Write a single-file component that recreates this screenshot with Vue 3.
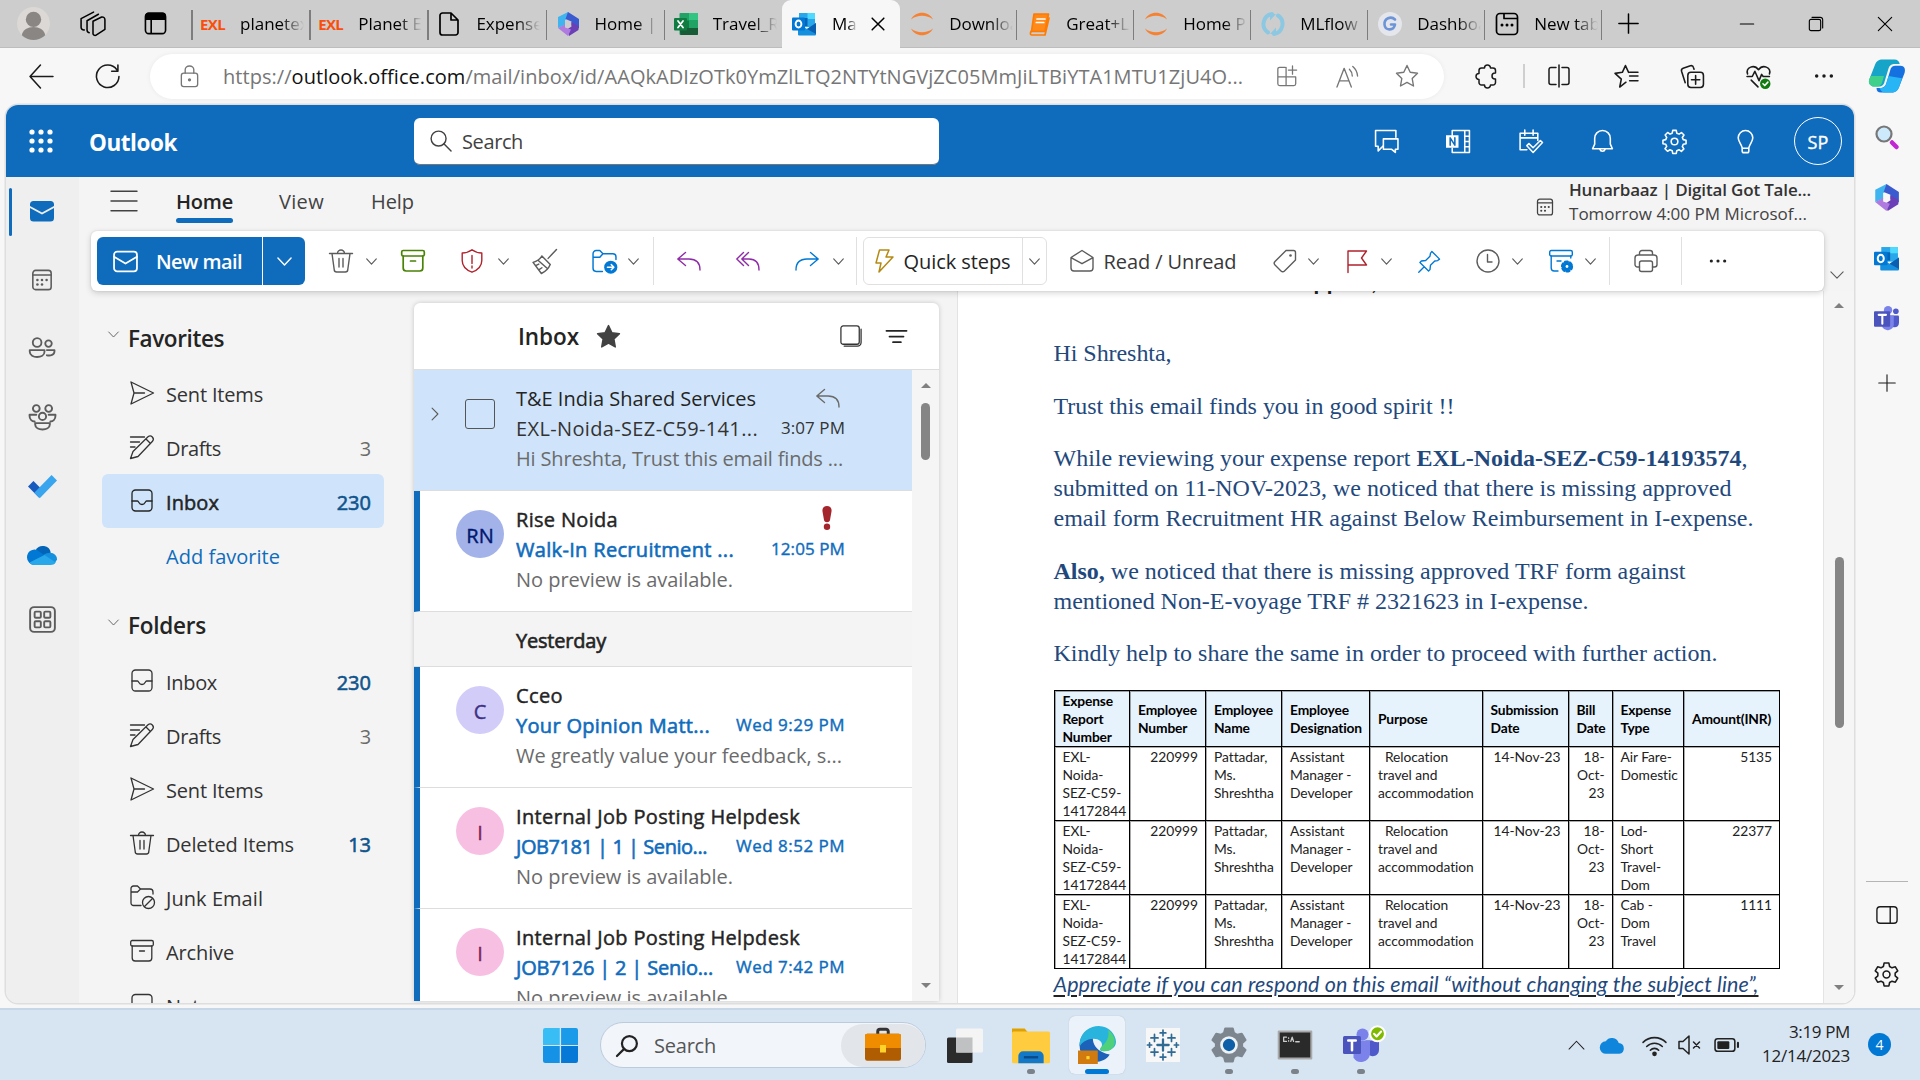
<script setup>
import { h } from 'vue'

// Line icons drawn on a 24 unit grid; colours come from currentColor.
const glyphs = {
  back: '<path d="M23 12H1M11 1 1 12l10 11"/>',
  refresh: '<path d="M21 5.500A10.800 10.800 0 1 0 23 12M22 1v6h-6"/>',
  lock: '<rect x="3.500" y="8.500" width="17" height="14" rx="2.500"/><path d="M7.500 8.500V5a4.500 4 0 0 1 9 0v3.500"/><circle cx="12" cy="15.500" r="1" fill="currentColor"/>',
  apps4: '<path d="M10 2.500H4A2 2 0 0 0 2 4.500V20.500a2 2 0 0 0 2 2h15.500a2 2 0 0 0 2-2v-7.500H2M11 2.500v20M18 1v9M13.500 5.500h9"/>',
  readA: '<path d="M1 23 8.500 3.500 16 23M4 16.500h9M14 4.500a10 10 0 0 1 3 7M17.500 1.500a14 14 0 0 1 5 10"/>',
  star: '<path d="m12 1.500 3.200 6.800 7.300 1-5.300 5.200 1.300 7.500L12 18.400 5.500 22l1.300-7.500L1.500 9.300l7.300-1z"/>',
  starFill: '<path fill="currentColor" d="m12 1.500 3.200 6.800 7.300 1-5.300 5.200 1.300 7.500L12 18.400 5.500 22l1.300-7.500L1.500 9.300l7.300-1z"/>',
  puzzle: '<path d="M6 4h3.500a3 3 0 0 1 6 0H18a2.500 2.500 0 0 1 2.500 2.500V9h-.500a3 3 0 0 0 0 6h.500v3.500A2.500 2.500 0 0 1 18 21h-2.500a3 3 0 0 1-6 0H6.500A2.500 2.500 0 0 1 4 18.500V15.500a3 3 0 0 1 0-6V6.500A2.500 2.500 0 0 1 6.500 4z"/>',
  split: '<path d="M9 3.500H4a2 2 0 0 0-2 2v13a2 2 0 0 0 2 2h5M15 3.500h5a2 2 0 0 1 2 2v13a2 2 0 0 1-2 2h-5M12 1v22"/>',
  favs: '<path d="m12 17.500-6 4.600 1.500-7.600L1.500 9l7-1 3-6.500L14.500 8M15.500 11.500h8M15.500 16h8M15.500 8h8" transform="translate(-.5 0)"/>',
  collect: '<rect x="7.500" y="8" width="15" height="14.500" rx="3"/><path d="M15 11v8.500M11 15.200h8M5 18l-3.500-11A2.500 2.500 0 0 1 3 4L10 1.700a2.500 2.500 0 0 1 3 1.800l.500 1.500"/>',
  heart: '<path d="M1.500 9.500C-.500 3 8 0 12 5.500 16 0 24.500 3 22.500 9.500M1 12h5l2.500-5 4 9 2.500-6 1.500 2h6M5 15.500l6.500 6.500"/><circle cx="18.500" cy="19" r="5" fill="#107c10" stroke="none"/><path d="m16.300 19 1.700 1.700 3-3.300" stroke="#fff"/>',
  dots: '<g fill="currentColor" stroke="none"><circle cx="4" cy="12" r="1.900"/><circle cx="12" cy="12" r="1.900"/><circle cx="20" cy="12" r="1.900"/></g>',
  waffle: '<g fill="currentColor" stroke="none"><circle cx="3" cy="3" r="2.600"/><circle cx="12" cy="3" r="2.600"/><circle cx="21" cy="3" r="2.600"/><circle cx="3" cy="12" r="2.600"/><circle cx="12" cy="12" r="2.600"/><circle cx="21" cy="12" r="2.600"/><circle cx="3" cy="21" r="2.600"/><circle cx="12" cy="21" r="2.600"/><circle cx="21" cy="21" r="2.600"/></g>',
  search: '<circle cx="10" cy="10" r="7.800"/><path d="m15.500 15.500 7.500 7.500"/>',
  chat: '<path d="M21 8V1.500H1.500v15H4V21l4.500-4.500"/><path d="M9 9.500h14v10h-2.500v3L17 19.500H9z"/>',
  onenote: '<path d="M6 6.500V1.500h16.500v21H6v-4M18 2v20M18 7h4M18 12h4M18 17h4"/><rect x="0" y="6" width="12" height="12" fill="currentColor" stroke="none"/><path d="M4 15.500v-7l4.500 7v-7" stroke="#0f6cbd"/>',
  calcheck: '<path d="M8.500 20H2V4h17v7M2 8.500h17M6.500 1v5M14.500 1v5"/><path d="m8.500 16 2-2 4 4 7-7 2 2-9 9.500z"/>',
  bell: '<path d="M12 1.500c-4.500 0-7.500 3.500-7.500 7.500v5.500L2.500 19h19l-2-4.500V9c0-4-3-7.500-7.500-7.500zM9.500 19.500a2.600 2.600 0 0 0 5 0"/>',
  cog: '<circle cx="12" cy="12" r="3.200"/><path d="M10.300 1.300h3.400l.500 2.700 2.200.900 2.300-1.500 2.400 2.400-1.600 2.300.900 2.100 2.700.500v3.400l-2.700.500-.900 2.200 1.500 2.300-2.400 2.400-2.300-1.600-2.100.900-.500 2.700h-3.400l-.500-2.700-2.200-.900-2.300 1.500-2.400-2.400 1.600-2.300-.900-2.100-2.700-.500v-3.400l2.700-.500.900-2.200-1.500-2.300 2.400-2.400 2.300 1.600 2.100-.900z"/>',
  bulb: '<path d="M12 1.500a7 7 0 0 0-7 7c0 3.500 2.700 5.500 3.800 9.500V21a1.700 1.700 0 0 0 1.700 1.700h3a1.700 1.700 0 0 0 1.700-1.700v-3c1.100-4 3.800-6 3.800-9.500a7 7 0 0 0-7-7zM8.800 18.500h6.400"/>',
  mailFill: '<path fill="currentColor" stroke="none" d="M3.500 2h17A3.500 3.500 0 0 1 24 5.500V7L12 13.500 0 7V5.500A3.500 3.500 0 0 1 3.500 2zM0 9l12 6.500L24 9v10a3.500 3.500 0 0 1-3.500 3.500h-17A3.500 3.500 0 0 1 0 19z"/>',
  mail: '<rect x="1" y="2.500" width="22" height="19" rx="3"/><path d="m1 7.500 11 6.500 11-6.500"/>',
  calendar: '<rect x="2" y="1.500" width="20" height="21" rx="3"/><path d="M2 6.500h20"/><g fill="currentColor" stroke="none"><circle cx="7" cy="12" r="1.400"/><circle cx="12" cy="12" r="1.400"/><circle cx="17" cy="12" r="1.400"/><circle cx="7" cy="17" r="1.400"/><circle cx="12" cy="17" r="1.400"/></g>',
  people: '<circle cx="7.500" cy="6" r="4"/><circle cx="18" cy="7" r="3"/><path d="M.700 13h13.600v1.500c0 6.500-13.600 6.500-13.600 0zM16.500 13h7v1c0 3.500-3.500 4.500-7 3.800"/>',
  groups: '<circle cx="6.500" cy="4" r="3"/><circle cx="17.500" cy="4" r="3"/><circle cx="12" cy="11" r="3.200"/><path d="M5.500 17h13v1.200c0 6-13 6-13 0zM6.500 9.500H.500v1c0 3 2 5 4.500 5M17.500 9.500h6v1c0 3-2 5-4.500 5"/>',
  todo: '<g stroke="none"><path fill="#185abd" d="m0 12 4.500-4.500L13 16l-4 5z"/><path fill="#38a5ee" d="M5.200 17.200 19.500 2.500 24 7 9.700 21.700z"/></g>',
  cloud: '<g stroke="none"><path fill="#0364b8" d="M7 8a6.500 6.500 0 0 1 12 2l-5 5z"/><path fill="#0078d4" d="M0 14a6 6 0 0 1 8-6l7 5-9 7a6 6 0 0 1-6-6z"/><path fill="#1490df" d="M13 12c6-4 11-1 11 3.500L22 19z"/><path fill="#28a8ea" d="m2 18 12-6 9 6a5 5 0 0 1-4 2H6a6 6 0 0 1-4-2z"/></g>',
  cloudBlue: '<path stroke="none" fill="#0f86dc" d="M6 20a6 6 0 0 1-.500-12A7 7 0 0 1 18 9.500 5.300 5.300 0 0 1 18.500 20z"/>',
  appsGrid: '<rect x="1" y="1" width="22" height="22" rx="3.500"/><rect x="5" y="5" width="5.500" height="5.500" rx="1"/><rect x="13.500" y="5" width="5.500" height="5.500" rx="1"/><rect x="5" y="13.500" width="5.500" height="5.500" rx="1"/><rect x="13.500" y="13.500" width="5.500" height="5.500" rx="1"/>',
  menu: '<path d="M0 3h24M0 12h24M0 21h24"/>',
  chev: '<path d="m1.500 6.500 10.500 11 10.500-11"/>',
  chevUp: '<path d="m1.500 17 10.500-11 10.500 11"/>',
  chevR: '<path d="m7 2 10 10L7 22"/>',
  trash: '<path d="M.500 4.500h23M8.500 4.500a3.500 3.500 0 0 1 7 0M3 4.500l2.200 16a2.500 2.500 0 0 0 2.500 2.500h8.600a2.500 2.500 0 0 0 2.500-2.500l2.200-16M10 9.500v8.500M14 9.500v8.500"/>',
  archive: '<rect x=".700" y="1.500" width="22.600" height="5.500" rx="1.500"/><path d="M2.200 7v12A3 3 0 0 0 5.200 22h13.600a3 3 0 0 0 3-3V7M9.500 12h5"/>',
  shield: '<path d="M12 .800C9 3 6 4 2.200 4v7.500c0 6 4 9.500 9.800 11.700 5.800-2.200 9.800-5.700 9.800-11.700V4C18 4 15 3 12 .800zM12 6.500v8M12 17v2"/>',
  broom: '<path d="M23.500.500 15.500 9M9.500 6.800l8 8M9.500 6.800c-2 3-5 5-8.500 6l8 10.700c4-2 7-5 8.500-8.700M6 11 14.500 18.500M3.500 16l3-1.500M6.500 20l3-2"/>',
  move: '<path d="M10 21.500H4a3 3 0 0 1-3-3V4.500A3 3 0 0 1 4 1.500h3.500L10.500 4.500H20a3 3 0 0 1 3 3V10M1 8h6.500l3-3.500"/><circle cx="18" cy="17.500" r="6.300" fill="#0078d4" stroke="none"/><path stroke="#fff" d="M14.800 17.500h6M18.500 15l2.500 2.500-2.500 2.500"/>',
  reply: '<path d="M8.500 3.500.800 10l7.700 6.500M.800 10H12c7 0 11 4 11 11"/>',
  replyAll: '<path d="M7.500 3.500.800 10l6.700 6.500M12.500 3.500 5.800 10l6.700 6.500M5.800 10H13c6.500 0 10 4 10 11"/>',
  forward: '<path d="M15.500 3.500 23.200 10l-7.700 6.500M23.200 10H12C5 10 1 14 1 21"/>',
  bolt: '<path d="M7.500 1h9.500l-3 7h7L7 23l2-9H4z"/>',
  open: '<path d="M1 8.500 12 1.500l11 7V19a3 3 0 0 1-3 3H4a3 3 0 0 1-3-3zM1 8.700l11 6 11-6"/>',
  tag: '<path d="M13 1.500h7.500a2 2 0 0 1 2 2V11L11.500 22a2.500 2.500 0 0 1-3.500 0L2 16a2.500 2.500 0 0 1 0-3.500z"/><circle cx="17.500" cy="6.500" r="1.300" fill="currentColor" stroke="none"/>',
  flag: '<path d="M3 23.500V2h18.500l-5 7 5 7H3"/>',
  pin: '<path d="m14.500 1.500 8 8-2 1.500-3 .5-4.500 4.500-.5 4.500-1.500 1.500-9-9L3.500 11.500l4.500-.5 4.500-4.500.5-3zM6.500 17.500.800 23.200"/>',
  clock: '<circle cx="12" cy="12" r="11"/><path d="M11.500 5.500V13H16"/>',
  archCog: '<rect x=".700" y="1.500" width="22.600" height="5.500" rx="1.500"/><path d="M2.200 7v12A3 3 0 0 0 5.200 22H9M21.800 7v2M8 12h4"/><circle cx="18" cy="17.500" r="4.200" fill="#0078d4" stroke="none"/><circle cx="18" cy="17.500" r="4.800" stroke-width="2.600" stroke-dasharray="2.600 2.430"/><circle cx="18" cy="17.500" r="1.400" fill="#fff" stroke="none"/>',
  print: '<path d="M5.500 18H3.500A2.500 2.500 0 0 1 1 15.500V9a3 3 0 0 1 3-3h16a3 3 0 0 1 3 3v6.500a2.500 2.500 0 0 1-2.500 2.500h-2M5.500 6V4A2.500 2.500 0 0 1 8 1.500h8A2.500 2.500 0 0 1 18.500 4v2"/><rect x="5.500" y="12" width="13" height="10.500" rx="2"/>',
  send: '<path d="M1 1 23.500 12 1 23l3-11zM4 12h10.500"/>',
  draft: '<path d="M.500 23.500 3 16.500 18 1.800c3-2.500 7 1.500 4.500 4.500L8 21.500zM16 4l4.500 4.500M.500 2h14M.500 7h9M.500 12h4.500"/>',
  inbox: '<rect x="2" y="1" width="20" height="21" rx="3.500"/><path d="M2 12h5.500c1.500 0 1 3.500 4.500 3.500s3-3.500 4.500-3.500H22"/>',
  junk: '<path d="M11 20.500H3.500a2.500 2.500 0 0 1-2.500-2.500V3.500A2.500 2.500 0 0 1 3.500 1H7.500L10.500 4H20a3 3 0 0 1 3 3v2M1 7h6.500l3-3"/><circle cx="18.500" cy="17.500" r="6"/><path d="m14.500 21.500 8-8"/>',
  note: '<rect x="2" y="1.500" width="20" height="21" rx="3.500"/>',
  select: '<rect x="1" y="1" width="20" height="20" rx="2.500"/><path d="M4.500 23H19a4 4 0 0 0 4-4V4.500"/>',
  filter: '<path d="M.500 5.500h23M4 12h16M8 18.500h9"/>',
  alert: '<g fill="#a4262c" stroke="none"><path d="M12 0c3 0 5 2 4.500 5.500L15 14c-.500 3-5.500 3-6 0L7.500 5.500C7 2 9 0 12 0z"/><circle cx="12" cy="20.700" r="3.200"/></g>',
  plus: '<path d="M12 1v22M1 12h22"/>',
  minus: '<path d="M2 12h20"/>',
  restore: '<rect x="2" y="5" width="17" height="17" rx="2.500"/><path d="M6 2h12.500A3.500 3.500 0 0 1 22 5.500V18"/>',
  close: '<path d="m2 2 20 20M22 2 2 22"/>',
  spaces: '<path d="M12 9.500 20 5.500a2.500 2.500 0 0 1 3 2.500V17L14.500 22.500A2 2 0 0 1 12 21z"/><path d="M8.500 20A2.500 2.500 0 0 1 6.500 17.500V9L17 3M4 17.500A2.500 2.500 0 0 1 1 15V7L12.500 1"/>',
  tabs: '<rect x="1.500" y="1.500" width="21" height="21" rx="3.500"/><path fill="currentColor" d="M2 7.500V4a2.500 2.500 0 0 1 2.500-2.500h15A2.500 2.500 0 0 1 22 4v3.500zM7.500 7v15"/>',
  file: '<path d="M14 1H5.500A2.500 2.500 0 0 0 3 3.500v17A2.500 2.500 0 0 0 5.500 23h13a2.500 2.500 0 0 0 2.500-2.500V8zM14 1v7h7"/>',
  newtab: '<rect x="1.500" y="1.500" width="21" height="21" rx="3.500"/><path d="M9 2v4.500h13"/><g fill="currentColor" stroke="none"><circle cx="7" cy="13" r="1.500"/><circle cx="12" cy="13" r="1.500"/><circle cx="17" cy="13" r="1.500"/></g>',
  person: '<g stroke="none"><circle cx="12" cy="12" r="12" fill="#dbd8d5"/><circle cx="12" cy="9" r="5.600" fill="#8a8683"/><path fill="#8a8683" d="M3.500 20.500c1-8 16-8 17 0a12 12 0 0 1-17 0z"/></g>',
  m365: '<g stroke="none"><path fill="#3fb4ee" d="M12 0 2 5v11l7-3V8l5-3z"/><path fill="#3a5bd0" d="M12 0 9.500 7l6 2.500v4l7.500 3V7z"/><path fill="#6b3fb5" d="M22.500 14v4L13 24l-2-6.500 4.500-3V10z"/><path fill="#b07be0" d="m2 16 7-3.500v3l6 2-3 6.500z"/></g>',
  excel: '<g stroke="none"><rect x="5.500" y="1" width="18.500" height="22" rx="1" fill="#21a366"/><path fill="#33c481" d="M15 1h9v7h-9z"/><path fill="#107c41" d="M5.500 8.500H15V16H5.500z"/><path fill="#185c37" d="M5.500 16H24v6a1 1 0 0 1-1 1H6.500z"/><rect y="6" width="13" height="12.500" rx="1" fill="#107c41"/></g><path stroke="#fff" stroke-width="1.800" d="m4 9 5 6.500M9 9l-5 6.500"/>',
  outlook: '<g stroke="none"><rect x="7" y="1" width="16" height="14" fill="#28a8ea"/><path fill="#50d9ff" d="M15.500 1H23v6h-7.500z"/><path fill="#0364b8" d="M7 6h8.500v8H7z"/><path fill="#1490df" d="M6 11.500 15 17l9-6v11.500a1 1 0 0 1-1 1H7a1 1 0 0 1-1-1z"/><path fill="#0a5fb0" d="m15 17 9-6v11z"/><rect y="5.500" width="13" height="13" rx="1" fill="#0078d4"/></g><ellipse cx="6.500" cy="12" rx="2.900" ry="3.500" stroke="#fff" stroke-width="1.900"/>',
  jupyter: '<g stroke="none" fill="#f58233"><path d="M1 7.500C5-1.500 19-1.500 23 7.500 17 2.500 7 2.500 1 7.500zM1 16.500c4 9 18 9 22 0-6 5-16 5-22 0z"/></g>',
  book: '<path fill="#ff8a1a" stroke="#ff7a00" d="M7 2h14.500L18 19.500H4.500z"/><path stroke="#ff7a00" d="M4 19.500c-1.500 3 0 3.500 1 3.500h13l4-17"/><path stroke="#fff" d="M10 7h8M9.300 10.500h7.500"/>',
  mlflow: '<g stroke="#8cc8e2" stroke-width="4"><path d="M7 20.500A10.200 10.200 0 0 1 11 2M17 3.500A10.200 10.200 0 0 1 13 22"/></g><path fill="#8cc8e2" stroke="none" d="m9 8.500 6-6.500H9zM15 15.500 9 22h6z"/>',
  gicon: '<circle cx="12" cy="12" r="12" fill="#e4e6ec" stroke="none"/><path stroke="#6d94d6" stroke-width="2.600" d="M17 7.500c-4-4-11-1-10.500 5 .5 6 9 7 10.500 0h-4"/>',
  copilot: '<g stroke="none"><path fill="#17a4c9" d="M9 1h8c2 0 3 1 3.500 3h-4c-2 0-3 1.500-3.500 3l-3 10c-.500 1-1.500 2-3 2H2.500C0 18-.500 16 .300 14L4 4.500C5 2 6.500 1 9 1z"/><path fill="#3fd18b" d="M1 12h9l-1.500 5c-.500 1-1.500 2-3 2H2.500C0 18-.500 16 .300 14z"/><path fill="#1570e0" d="M15 23H8c-2 0-3-1-3-3h3c2 0 3-1.500 3.500-3l3-10c.500-1 1.500-1.800 3-1.800H21c2.500 0 3.500 2 2.700 4.800L20 19.500c-1 2.500-2.500 3.500-5 3.500z"/><path fill="#28b5f5" d="m13 12-1.500 5c-1 2.500-2 3-3.500 3H7c1 2 2 3 3.500 3H15c2.500 0 4-1 5-3.500l2-6z"/></g>',
  lens: '<circle cx="9" cy="9" r="7.500" fill="#cdeafc" stroke="#777" stroke-width="2.200"/><path stroke="#c026d3" stroke-width="4.500" d="m17 17.500 4.500 4.500"/>',
  teams: '<g stroke="none"><circle cx="13.500" cy="4" r="4" fill="#7b83eb"/><circle cx="21" cy="5" r="2.700" fill="#5059c9"/><path fill="#5059c9" d="M15 9h8a1 1 0 0 1 1 1v6c0 5-6 6-8 2z"/><path fill="#7b83eb" d="M8 9h11v9a6 6 0 0 1-11 2.500z"/><rect y="5" width="15.500" height="15" rx="1" fill="#4b53bc"/></g><path stroke="#fff" stroke-width="2" d="M4.500 8.500h7M8 8.500V17"/>',
  panel: '<rect x="1" y="3" width="22" height="18" rx="3.500"/><path d="M15.500 3v18"/>',
  gear: '<circle cx="12" cy="12" r="3.300"/><path d="M9.700 1h4.600l.7 3.300 2.300 1.300 3.200-1L22.800 8.500l-2.500 2.200v2.600l2.500 2.200-2.300 3.900-3.200-1-2.300 1.300-.7 3.300H9.700L9 19.700l-2.300-1.300-3.200 1-2.300-3.900 2.500-2.200v-2.600L1.200 8.500l2.300-3.900 3.200 1L9 4.300z"/>',
  win: '<g stroke="none" fill="#0f86dc"><path fill="#38bdf5" d="M0 1.500A1.500 1.500 0 0 1 1.500 0h10v11.600H0z"/><path fill="#1a9bea" d="M12.400 0h10A1.500 1.500 0 0 1 24 1.500v10.100H12.400z"/><path fill="#1592e6" d="M0 12.400h11.500V24h-10A1.500 1.500 0 0 1 0 22.500z"/><path fill="#0678d6" d="M12.400 12.400H24v10.100a1.500 1.500 0 0 1-1.500 1.500H12.400z"/></g>',
  bag: '<path stroke="#333" stroke-width="2" d="M8.500 4.500V3a1.500 1.500 0 0 1 1.500-1.500h4A1.500 1.500 0 0 1 15.500 3v1.500"/><g stroke="none"><rect x="0" y="4.500" width="24" height="18" rx="1.500" fill="#b05c00"/><path fill="#f08c00" d="M0 6A1.500 1.500 0 0 1 1.500 4.500h21A1.500 1.500 0 0 1 24 6v8H0z"/><rect x="10" y="12" width="4" height="5" fill="#ffd42a"/></g>',
  taskview: '<g stroke="none"><rect x="0" y="7" width="17" height="17" rx="1" fill="#2b2b2b"/><rect x="6" y="1" width="18" height="16" rx="1" fill="#f4f4f4"/><path fill="#c0c1c3" d="M6 7h11v10H6z"/></g>',
  folder: '<g stroke="none"><path fill="#e0a100" d="M0 1.500h8l2 2.500v5H0z"/><rect y="3.500" width="24" height="20" rx="1" fill="#ffcc40"/><path fill="#1478c8" d="M4 23.500V19a3 3 0 0 1 3-3h10a3 3 0 0 1 3 3v4.500z"/><rect x="7.500" y="19" width="9" height="1.500" fill="#0a4a8a"/></g>',
  edge: '<g stroke="none"><path fill="#1b62b8" d="M1 12C1 5 7 0 13 1c-6 4-5 15 7 17-4 7-19 7-19-6z"/><path fill="#28b4dc" d="M1 11C2 3 8 0 13 0c7 0 11 6 11 10s-4 6-8 6c-3 0-2-2-1-3 1-3-2-5-5-5-5 0-8 3-9 5z"/><path fill="#4fd07a" d="M19 2.500c6 4 6 13-2 13.500-4 0-3-2-2-3 3-3 5-6 4-10.500z"/><rect x="0" y="15.500" width="12.500" height="8.500" fill="#d07a10"/><rect x="5.300" y="19" width="2" height="2" fill="#ffd42a"/></g>',
  tableau: '<rect width="24" height="24" fill="#f7f7f7" stroke="none"/><g stroke="#2f6a95"><path d="M12 8v8M8 12h8" stroke-width="1.600"/><path stroke-width="1.200" d="M12 1.500v4M10 3.500h4M12 18.500v4M10 20.500h4M6 4.500v5M3.500 7h5M18 4.500v5M15.500 7h5M6 14.500v5M3.500 17h5M18 14.500v5M15.500 17h5M2.500 10.500v3M1 12h3M21.500 10.500v3M20 12h3"/></g>',
  sysgear: '<path fill="#7d868f" stroke="#7d868f" d="M9.500 1h5l.8 3 2.200 1.200L20.500 4.500 23 8.700l-2.300 2.200v2.200L23 15.300l-2.500 4.200-3-.7L15.300 20l-.8 3h-5l-.8-3-2.200-1.200-3 .7L1 15.300l2.300-2.200v-2.200L1 8.700l2.500-4.200 3 .7L8.700 4z"/><circle cx="12" cy="12" r="5" fill="#0f5fa8" stroke="#eef2f5" stroke-width="1.800"/>',
  cmd: '<rect x=".500" y="2.500" width="23" height="19" fill="#2a2a2a" stroke="#a9a9a9"/><path stroke="#ccc" stroke-width=".900" d="M6 6.500H4v3h2M7.500 7v.3M7.500 9v.3M9 9.500l1-3 1 3M12.500 9.700h2.500"/>',
  teamsOk: '<g stroke="none"><circle cx="13" cy="5" r="4" fill="#7b83eb"/><path fill="#5059c9" d="M15 9h9v6c0 5-6 6-8 2z"/><path fill="#7b83eb" d="M7 9h11v9a6 6 0 0 1-11 2.500z"/><rect y="6" width="12" height="12" rx="1" fill="#4b53bc"/></g><path stroke="#fff" stroke-width="1.700" d="M3.500 9h5M6 9v6.500"/><circle cx="23" cy="4.500" r="5" fill="#7fba00" stroke="#fff"/><path stroke="#fff" stroke-width="1.400" d="m20.700 4.500 1.700 1.800 3-3.300"/>',
  wifi: '<path d="M1 9a15.500 15.500 0 0 1 22 0M4.500 13a10.500 10.500 0 0 1 15 0M8 16.500a5.500 5.500 0 0 1 8 0"/><circle cx="12" cy="20" r="1.500" fill="currentColor"/>',
  mute: '<path d="M1 8.500h4L11 3v18l-6-5.500H1zM15.500 9l6 6M21.500 9l-6 6"/>',
  battery: '<rect x="1" y="5.500" width="19" height="12" rx="2.500"/><path d="M23 9.500v4" stroke-width="2"/><rect x="3.200" y="7.800" width="11.500" height="7.500" rx="1" fill="currentColor" stroke="none"/>',
}

// Renders one glyph at the requested pixel size.
const Ic = (p) =>
  h('svg', {
    width: p.s || 24, height: p.s || 24, viewBox: '0 0 24 24', fill: 'none',
    stroke: 'currentColor', 'stroke-width': p.w || 1.4, 'stroke-linejoin': 'round',
    'stroke-linecap': 'round', overflow: 'visible', innerHTML: glyphs[p.n],
  })
Ic.props = ['n', 's', 'w']

// Tracks a label so that it fills the given width.
const vFit = {
  mounted(el, { value }) {
    const n = el.textContent.trim().length
    const r = document.createRange()
    r.selectNodeContents(el)
    el.style.letterSpacing = (value - r.getBoundingClientRect().width) / n + 'px'
  },
}

// Turns centre positions into gaps between flex items.
function spread(start, list) {
  let x = start
  return list.map(([n, cx, s = 24, color, w]) => {
    const gap = cx - s / 2 - x
    x = cx + s / 2
    return { n, s, w, style: { marginLeft: gap + 'px', color } }
  })
}

const tabs = [
  { logo: 'EXL', t: 'planetexl' }, { logo: 'EXL', t: 'Planet EX' }, { i: 'file', t: 'Expense' },
  { i: 'm365', t: 'Home | M' }, { i: 'excel', t: 'Travel_Re' }, { i: 'outlook', t: 'Mail', on: true },
  { i: 'jupyter', t: 'Downloa' }, { i: 'book', t: 'Great+Le' }, { i: 'jupyter', t: 'Home Pa' },
  { i: 'mlflow', t: 'MLflow' }, { i: 'gicon', t: 'Dashboa' }, { i: 'newtab', t: 'New tab' },
]
const winBtns = spread(1602, [['plus', 1628, 21], ['minus', 1747, 16], ['restore', 1816, 16], ['close', 1885, 16]])
const urlIcons = spread(1244, [['apps4', 1287, 22], ['readA', 1347, 23], ['star', 1407, 24]])
const edgeIcons = spread(1444, [['puzzle', 1487, 24], ['|', 1524, 2], ['split', 1559, 24], ['favs', 1626, 25], ['collect', 1692, 25], ['heart', 1758, 25], ['dots', 1824, 22]])
const headIcons = spread(939, [['chat', 1386, 25], ['onenote', 1458, 25], ['calcheck', 1530, 25], ['bell', 1602, 25], ['cog', 1674, 25], ['bulb', 1745, 25]])
const grey = '#5c5c5c'
const red = '#b0222c'
const violet = '#8f2ba8'
const blue = '#0078d4'
const tools1 = spread(305, [
  ['trash', 341, 24, grey], ['chev', 371, 11, grey], ['archive', 413, 24, '#498205', 1.700], ['shield', 472, 24, red],
  ['chev', 503, 11, grey], ['broom', 544, 25, grey], ['move', 604, 25, blue], ['chev', 633, 11, grey], ['|', 653, 1],
  ['reply', 689, 24, violet], ['replyAll', 748, 24, violet], ['forward', 807, 24, blue], ['chev', 838, 11, grey], ['|', 856, 1],
])
const tools2 = spread(1236, [
  ['tag', 1285, 24, grey], ['chev', 1314, 11, grey], ['flag', 1357, 24, red], ['chev', 1387, 11, grey], ['pin', 1430, 23, blue],
  ['clock', 1488, 24, grey], ['chev', 1518, 11, grey], ['archCog', 1561, 24, blue], ['chev', 1591, 11, grey], ['|', 1610, 1],
  ['print', 1646, 24, grey], ['|', 1682, 1], ['dots', 1718, 20, '#222'],
])
const rail = [['mailFill', 24, '#0f6cbd'], ['calendar', 22], ['people', 26], ['groups', 27], ['todo', 29], ['cloud', 30], ['appsGrid', 27]]
const groups = [
  { title: 'Favorites', w: 96, rows: [['send', 'Sent Items', 97], ['draft', 'Drafts', 55, '3'], ['inbox', 'Inbox', 53, '230', true], ['', 'Add favorite', 114]] },
  { title: 'Folders', w: 78, rows: [['inbox', 'Inbox', 51, '230'], ['draft', 'Drafts', 55, '3'], ['send', 'Sent Items', 97], ['trash', 'Deleted Items', 128, '13'], ['junk', 'Junk Email', 97], ['archive', 'Archive', 68], ['note', 'Notes', 53]] },
]
const mails = [
  { from: 'T&E India Shared Services', fw: 240, sub: 'EXL-Noida-SEZ-C59-141...', sw: 242, time: '3:07 PM', tw: 64, text: 'Hi Shreshta, Trust this email finds ...', pw: 327, sel: true },
  { from: 'Rise Noida', fw: 102, sub: 'Walk-In Recruitment ...', sw: 218, time: '12:05 PM', tw: 74, text: 'No preview is available.', pw: 217, av: 'RN', c: '#a3b2e8', f: '#001870', alert: true },
  { day: 'Yesterday' },
  { from: 'Cceo', fw: 47, sub: 'Your Opinion Matt...', sw: 194, time: 'Wed 9:29 PM', tw: 109, text: 'We greatly value your feedback, s...', pw: 326, av: 'C', c: '#d2ccf8', f: '#3f3182' },
  { from: 'Internal Job Posting Helpdesk', fw: 284, sub: 'JOB7181 | 1 | Senio...', sw: 191, time: 'Wed 8:52 PM', tw: 109, text: 'No preview is available.', pw: 217, av: 'I', c: '#f7c0e3', f: '#80215d' },
  { from: 'Internal Job Posting Helpdesk', fw: 284, sub: 'JOB7126 | 2 | Senio...', sw: 197, time: 'Wed 7:42 PM', tw: 109, text: 'No preview is available.', pw: 217, av: 'I', c: '#f7c0e3', f: '#80215d' },
]
const cols = [75.500, 76, 76, 88, 112.500, 86, 44, 71.500, 96]
const heads = [['Expense', 'Report', 'Number'], ['Employee', 'Number'], ['Employee', 'Name'], ['Employee', 'Designation'], ['Purpose'], ['Submission', 'Date'], ['Bill', 'Date'], ['Expense', 'Type'], ['Amount(INR)']]
const expense = (type, amount) => [['EXL-', 'Noida-', 'SEZ-C59-', '14172844'], ['220999'], ['Pattadar,', 'Ms.', 'Shreshtha'], ['Assistant', 'Manager -', 'Developer'], ['\u00a0\u00a0Relocation', 'travel and', 'accommodation'], ['14-Nov-23'], ['18-', 'Oct-', '23'], type, [amount]]
const rows = [expense(['Air Fare-', 'Domestic'], '5135'), expense(['Lod-', 'Short', 'Travel-', 'Dom'], '22377'), expense(['Cab -', 'Dom', 'Travel'], '1111')]
const apps = [['taskview', 36], ['folder', 38, 'dot'], ['edge', 38, 'on'], ['tableau', 34], ['sysgear', 36, 'dot'], ['cmd', 34, 'dot'], ['teamsOk', 36, 'dot']]
const side = [['lens', 24], ['m365', 27], ['outlook', 25], ['teams', 25], ['plus', 18]]
const tray = spread(1400, [['chevUp', 1578, 17, '#222'], ['cloudBlue', 1614, 25], ['wifi', 1656, 25, '#222'], ['mute', 1691, 24, '#222'], ['battery', 1728, 25, '#222']])
</script>

<template>
  <div class="screen">
    <div class="tabbar">
      <div class="tabtools"><Ic n="person" s="33" /><Ic n="spaces" s="26" /><Ic n="tabs" s="23" w="1.700" /></div>
      <div v-for="(t, i) in tabs" :key="i" class="tab" :class="{ on: t.on, left: i < 5, right: i > 5 }">
        <b v-if="t.logo" class="exl" v-fit="25">{{ t.logo }}</b>
        <Ic v-else :n="t.i" s="24" w="1.700" class="tabicon" />
        <span class="tabtext">{{ t.t }}</span>
        <Ic v-if="t.on" n="close" s="14" w="2.600" class="x" />
      </div>
      <Ic v-for="b in winBtns" :key="b.n" :n="b.n" :s="b.s" :style="b.style" w="1.700" />
    </div>

    <div class="toolbar">
      <div class="nav"><Ic n="back" s="25" w="1.500" /><Ic n="refresh" s="25" w="1.500" /></div>
      <div class="omnibox">
        <Ic n="lock" s="23" />
        <span class="url" v-fit="1020">https://<i>outlook.office.com</i>/mail/inbox/id/AAQkADIzOTk0YmZlLTQ2NTYtNGVjZC05MmJiLTBiYTA1MTU1ZjU4O...</span>
        <Ic v-for="b in urlIcons" :key="b.n" :n="b.n" :s="b.s" :style="b.style" />
      </div>
      <template v-for="b in edgeIcons" :key="b.n">
        <span v-if="b.n === '|'" class="bar" :style="b.style"></span>
        <Ic v-else :n="b.n" :s="b.s" :style="b.style" w="1.500" />
      </template>
      <Ic n="copilot" s="36" class="copilot" />
    </div>

    <div class="main">
      <div class="app">
        <header class="head">
          <Ic n="waffle" s="24" class="waffle" />
          <span class="brand" v-fit="88">Outlook</span>
          <div class="find"><Ic n="search" s="23" w="1.500" /><span v-fit="61">Search</span></div>
          <Ic v-for="b in headIcons" :key="b.n" :n="b.n" :s="b.s" :style="b.style" w="1.500" />
          <span class="me"><span v-fit="21">SP</span></span>
        </header>

        <div class="work">
          <nav class="rail">
            <div v-for="([n, s, c], i) in rail" :key="n" class="railitem" :class="{ cur: !i }"><Ic :n="n" :s="s" :style="{ color: c }" w="1.700" /></div>
          </nav>
          <div class="content">
            <div class="menu">
              <Ic n="menu" s="26" class="burger" w="1.300" />
              <span class="mt sel" v-fit="57">Home</span><span class="mt" v-fit="45">View</span><span class="mt" v-fit="43">Help</span>
              <Ic n="calendar" s="18" class="evi" w="1.700" />
              <div class="ev"><b v-fit="242">Hunarbaaz | Digital Got Tale...</b><span v-fit="238">Tomorrow 4:00 PM Microsof...</span></div>
            </div>
            <div class="ribbonrow">
              <div class="ribbon">
                <div class="newmail"><Ic n="mail" s="25" w="1.700" /><span v-fit="86">New mail</span><div class="drop"><Ic n="chev" s="15" w="2.300" /></div></div>
                <template v-for="(b, i) in tools1" :key="i">
                  <span v-if="b.n === '|'" class="sep" :style="b.style"></span>
                  <Ic v-else :n="b.n" :s="b.s" :w="b.w || (b.s < 12 ? 2.500 : 1.400)" :style="b.style" />
                </template>
                <div class="quick"><Ic n="bolt" s="24" class="gold" w="1.500" /><span v-fit="107">Quick steps</span><div class="qd"><Ic n="chev" s="11" w="2.500" /></div></div>
                <div class="read"><Ic n="open" s="24" /><span v-fit="133">Read / Unread</span></div>
                <template v-for="(b, i) in tools2" :key="i">
                  <span v-if="b.n === '|'" class="sep" :style="b.style"></span>
                  <Ic v-else :n="b.n" :s="b.s" :w="b.s < 12 ? 2.500 : 1.400" :style="b.style" />
                </template>
              </div>
              <Ic n="chev" s="14" class="fold" w="1.900" />
            </div>

            <div class="panes">
              <aside class="folders">
                <section v-for="g in groups" :key="g.title" class="group">
                  <div class="gt"><Ic n="chev" s="11" w="2" /><span v-fit="g.w">{{ g.title }}</span></div>
                  <div v-for="[n, t, w, c, on] in g.rows" :key="t" class="fr" :class="{ on, link: !n }">
                    <span class="fi"><Ic v-if="n" :n="n" s="24" w="1.300" /></span>
                    <span class="fn" v-fit="w">{{ t }}</span>
                    <span v-if="c" class="fc" :class="{ strong: c !== '3' }">{{ c }}</span>
                  </div>
                </section>
              </aside>

              <section class="list">
                <div class="lh"><span v-fit="61">Inbox</span><Ic n="starFill" s="25" class="st" /><Ic n="select" s="22" class="se" /><Ic n="filter" s="21" class="fl" w="2" /></div>
                <div class="lb">
                  <div class="items">
                    <template v-for="(m, i) in mails" :key="i">
                      <div v-if="m.day" class="day"><span v-fit="90">{{ m.day }}</span></div>
                      <div v-else class="mail" :class="{ sel: m.sel }">
                        <div class="who">
                          <template v-if="m.sel"><Ic n="chevR" s="14" w="1.900" /><span class="box"></span></template>
                          <span v-else class="av" :style="{ background: m.c, color: m.f }">{{ m.av }}</span>
                        </div>
                        <div class="mt3">
                          <div class="l1"><span v-fit="m.fw">{{ m.from }}</span><Ic v-if="m.sel" n="reply" s="24" class="rp" /><Ic v-if="m.alert" n="alert" s="24" class="al" /></div>
                          <div class="l2"><span v-fit="m.sw">{{ m.sub }}</span><span class="tm" v-fit="m.tw">{{ m.time }}</span></div>
                          <div class="l3"><span v-fit="m.pw">{{ m.text }}</span></div>
                        </div>
                      </div>
                    </template>
                  </div>
                  <div class="sb s1"><i class="up"></i><i class="th"></i><i class="dn"></i></div>
                </div>
              </section>

              <article class="reader">
                <div class="doc">
                  <div class="cut">Support,</div>
                  <p><span v-fit="118">Hi Shreshta,</span></p>
                  <p><span v-fit="401">Trust this email finds you in good spirit !!</span></p>
                  <p><span v-fit="694">While reviewing your expense report <b>EXL-Noida-SEZ-C59-14193574</b>,</span><br /><span v-fit="678">submitted on 11-NOV-2023, we noticed that there is missing approved</span><br /><span v-fit="700">email form Recruitment HR against Below Reimbursement in I-expense.</span></p>
                  <p><span v-fit="632"><b>Also,</b> we noticed that there is missing approved TRF form against</span><br /><span v-fit="535">mentioned Non-E-voyage TRF # 2321623 in I-expense.</span></p>
                  <p><span v-fit="664">Kindly help to share the same in order to proceed with further action.</span></p>
                  <table>
                    <colgroup><col v-for="(c, i) in cols" :key="i" :style="{ width: c + 'px' }" /></colgroup>
                    <thead><tr><th v-for="(c, i) in heads" :key="i"><div v-for="l in c" :key="l">{{ l }}</div></th></tr></thead>
                    <tbody><tr v-for="(r, j) in rows" :key="j"><td v-for="(c, i) in r" :key="i" :class="{ num: [1, 5, 6, 8].includes(i) }"><div v-for="l in c" :key="l">{{ l }}</div></td></tr></tbody>
                  </table>
                  <div class="end"><span v-fit="705">Appreciate if you can respond on this email “without changing the subject line”,</span></div>
                </div>
                <div class="sb s2"><i class="up"></i><i class="th"></i><i class="dn"></i></div>
              </article>
            </div>
          </div>
        </div>
      </div>
      <aside class="edgebar">
        <div v-for="[n, s] in side" :key="n" class="eb"><Ic :n="n" :s="s" w="1.500" /></div>
        <div class="eline"></div>
        <div class="eb low"><Ic n="panel" s="22" w="1.500" /></div>
        <div class="eb low"><Ic n="gear" s="25" w="1.500" /></div>
      </aside>
    </div>

    <div class="taskbar">
      <Ic n="win" s="35" class="win" />
      <div class="tsearch"><Ic n="search" s="23" w="2.300" class="mirror" /><span v-fit="62">Search</span><div class="bagbox"><Ic n="bag" s="36" /></div></div>
      <div class="apps"><div v-for="[n, s, k] in apps" :key="n" class="ap" :class="k"><Ic :n="n" :s="s" /></div></div>
      <div class="tray">
        <Ic v-for="b in tray" :key="b.n" :n="b.n" :s="b.s" :style="b.style" w="1.500" />
        <div class="clock"><span v-fit="61">3:19 PM</span><span v-fit="88">12/14/2023</span></div>
        <span class="badge">4</span>
      </div>
    </div>
  </div>
</template>

<style>
body { margin: 0; overflow: hidden; }
</style>

<style scoped>
* { box-sizing: border-box; }
svg { flex: none; display: block; }
.screen { width: 1920px; height: 1080px; display: flex; flex-direction: column; overflow: hidden; background: #f7f7f7; color: #242424; font-family: "Open Sans", "Noto Sans", sans-serif; font-size: 20px; white-space: nowrap; }
.tabbar { height: 48px; flex: none; display: flex; align-items: center; background: #cdcdcd; border-bottom: 1px solid #bdbdbd; color: #000; font-size: 17px; }
.tabtools { width: 191px; flex: none; display: flex; align-items: center; padding-left: 17px; gap: 30px; }
.tabtools svg:nth-child(3) { margin-left: 8px; }
.tab { position: relative; width: 118.200px; height: 48px; flex: none; display: flex; align-items: center; padding-left: 9px; }
.tab.right { width: 117px; }
.tab.left::before, .tab.right::after { content: ""; position: absolute; left: 0; top: 10px; width: 1.500px; height: 30px; background: #7d7d7d; }
.tab.right::after { left: auto; right: 0; }
.tab.on { background: #f7f7f7; border-radius: 9px 9px 0 0; }
.exl { width: 26px; font: 700 15px "Open Sans", sans-serif; color: #fb4e0b; }
.tabicon { width: 26px; }
.tabtext { width: 64px; margin-left: 14px; overflow: hidden; -webkit-mask: linear-gradient(90deg, #000 64%, transparent 100%); mask: linear-gradient(90deg, #000 64%, transparent 100%); }
.tab.on .tabtext { width: 25px; margin-left: 15px; }
.x { margin-left: 14px; }
.toolbar { height: 57px; flex: none; display: flex; align-items: center; padding-bottom: 1px; color: #1b1b1b; }
.nav { width: 150px; display: flex; padding-left: 29px; gap: 41px; }
.omnibox { width: 1294px; height: 45px; border-radius: 23px; background: #fff; display: flex; align-items: center; padding-left: 28px; color: #767676; box-shadow: 0 0 5px #0000000f; }
.url { width: 1020px; margin-left: 22px; margin-right: 1px; }
.url i { font-style: normal; color: #111; }
.bar { width: 2px; height: 24px; background: #cfcfcf; }
.copilot { margin-left: 34px; }
.main { height: 903px; flex: none; display: flex; padding-left: 6px; }
.app { width: 1848px; height: 898px; display: flex; flex-direction: column; border-radius: 12px; overflow: hidden; background: #f4f4f4; box-shadow: 0 0 0 1.500px #dedede; }
.head { height: 72px; flex: none; display: flex; align-items: center; background: #0f6cbd; color: #fff; }
.waffle { margin-left: 23px; }
.brand { margin-left: 36px; margin-top: 2px; width: 325px; font-size: 22.500px; font-weight: 700; }
.find { width: 525px; height: 47px; display: flex; align-items: center; gap: 10px; padding-left: 15px; background: #fff; border-radius: 6px; border-bottom: 1px solid #777; color: #424242; }
.find span { padding-top: 1px; }
.me { width: 48px; height: 48px; margin-left: 36.500px; display: grid; place-items: center; border: 1.300px solid #fff; border-radius: 50%; font-size: 18px; padding-top: 1px; -webkit-text-stroke: .4px; }
.work { display: flex; flex: 1; min-height: 0; }
.rail { width: 73px; flex: none; background: #efefef; color: #5c5c5c; }
.railitem { position: relative; height: 68.700px; display: grid; place-items: center; padding-right: 1px; }
.railitem.cur::before { content: ""; position: absolute; left: 3px; top: 11px; width: 2.500px; height: 48px; border-radius: 2px; background: #0f6cbd; }
.railitem:nth-child(7) { margin-top: -4px; }
.content { width: 1775px; display: flex; flex-direction: column; min-height: 0; }
.menu { height: 54px; flex: none; display: flex; align-items: center; color: #424242; padding-bottom: 6px; }
.burger { margin: 0 39px 0 32px; }
.mt { position: relative; width: 57px; margin-right: 46px; }
.mt:nth-of-type(2) { width: 44px; margin-right: 48px; }
.mt:nth-of-type(3) { width: 42px; margin-right: 0; }
.mt.sel { color: #242424; font-weight: 600; }
.mt.sel::after { content: ""; position: absolute; left: 0; bottom: -8px; width: 57px; height: 5px; border-radius: 3px; background: #0f6cbd; }
.evi { margin: 12px 15px 0 1123px; }
.ev { display: flex; flex-direction: column; font-size: 17px; line-height: 23.500px; padding-top: 1px; }
.ev b { font-weight: 600; color: #333; }
.ribbonrow { position: relative; z-index: 2; height: 60px; flex: none; display: flex; padding-left: 12px; }
.ribbon { width: 1733px; flex: none; display: flex; align-items: center; background: #fff; border-radius: 6px; box-shadow: 0 2px 6px #0000002b, 0 0 2px #00000020; padding-left: 6px; }
.newmail { width: 208px; height: 48px; display: flex; align-items: center; background: #0f6cbd; color: #fff; border-radius: 6px; padding-left: 16px; font-weight: 600; }
.newmail > span { width: 106px; margin-left: 18px; padding-top: 1px; }
.drop { width: 43px; height: 48px; display: grid; place-items: center; border-left: 1px solid #fff; }
.sep { width: 1px; height: 48px; background: #e0e0e0; }
.quick { width: 184px; height: 48px; margin-left: 6px; display: flex; align-items: center; border: 1px solid #e0e0e0; border-radius: 6px; padding-left: 8px; color: #242424; }
.quick > span { width: 119px; margin-left: 8px; padding-top: 1px; }
.gold { color: #b58a14; }
.qd { height: 46px; width: 24px; border-left: 1px solid #e0e0e0; display: grid; place-items: center; color: #5c5c5c; }
.read { display: flex; align-items: center; margin-left: 23px; color: #5c5c5c; }
.read span { width: 132px; margin-left: 10px; padding-top: 1px; color: #383838; }
.fold { margin: 37px 0 0 6px; color: #5c5c5c; }
.panes { height: 712px; flex: none; display: flex; }
.folders { width: 335px; flex: none; padding: 15px 0 0 23px; overflow: hidden; }
.group { margin-bottom: 12px; }
.gt { height: 60px; padding-top: 4px; display: flex; align-items: center; font-size: 22.500px; font-weight: 600; }
.gt svg { margin: -7px 9px 0 6px; color: #5c5c5c; }
.group:nth-child(2) .gt { padding-top: 3px; }
.fr { height: 54px; width: 282px; display: flex; align-items: center; border-radius: 6px; color: #333; }
.fn, .fc { padding-top: 2px; }
.fr.on { background: #cfe4fa; color: #242424; }
.fr.on .fn { -webkit-text-stroke: .5px; }
.fr.link { color: #0f6cbd; }
.fi { width: 24px; margin: 0 12px 0 28px; }
.fc { margin-left: auto; margin-right: 13px; color: #6b6b6b; letter-spacing: -.3px; }
.fc.strong { color: #0f548c; letter-spacing: 0; -webkit-text-stroke: .6px; }
.list { width: 525px; height: 698px; flex: none; margin-top: 12px; background: #fff; border-radius: 6px 6px 0 0; overflow: hidden; box-shadow: 0 0 5px #00000030; }
.lh { height: 67px; display: flex; align-items: center; padding-left: 104px; border-bottom: 1px solid #ddd; font-size: 22.500px; font-weight: 600; }
.lh > span { width: 61px; }
.st { margin-left: 17px; color: #424242; }
.se { margin-left: 219px; color: #333; }
.fl { margin-left: 24px; }
.lb { display: flex; height: 631px; overflow: hidden; }
.items { width: 498px; }
.mail { height: 121px; display: flex; border-bottom: 1px solid #ddd; border-left: 6px solid #0f6cbd; background: #fff; background-clip: padding-box; }
.mail.sel { background: #cfe4fa; border-left-color: #cfe4fa; }
.who { width: 96px; display: flex; align-items: flex-start; }
.who svg { margin: 37px 0 0 8px; color: #5c5c5c; }
.box { width: 30px; height: 30px; flex: none; margin: 29px 0 0 23px; border: 1.500px solid #555; border-radius: 3px; }
.av { width: 48px; height: 48px; flex: none; margin: 19px 0 0 36px; border-radius: 50%; display: grid; place-items: center; font-size: 20px; padding-top: 2px; -webkit-text-stroke: .4px; }
.mt3 { width: 329px; padding-top: 14px; }
.l1, .l2, .l3 { height: 30px; line-height: 30px; display: flex; align-items: center; }
.l1 { -webkit-text-stroke: .45px; }
.l2 { color: #0f6cbd; -webkit-text-stroke: .6px; }
.sel .l1, .sel .l2, .sel .l2 .tm { -webkit-text-stroke: 0; }
.sel .l2 { color: #333; }
.l3 { color: #6b6b6b; }
.tm { margin-left: auto; font-size: 17px; margin-top: -3px; -webkit-text-stroke: .4px; }
.rp { margin: -3px 5px 0 auto; color: #6b6b6b; }
.al { margin: -4px 6px 0 auto; }
.day { height: 55px; display: flex; align-items: center; padding: 2px 0 0 102px; background: #f4f4f4; border-bottom: 1px solid #ddd; -webkit-text-stroke: .6px; }
.sb { display: flex; flex-direction: column; align-items: center; background: #f5f5f5; }
.sb i { display: block; flex: none; }
.up { border: 5px solid transparent; border-top: 0; border-bottom: 5px solid #808080; }
.dn { border: 5px solid transparent; border-bottom: 0; border-top: 5px solid #808080; }
.th { width: 9px; border-radius: 5px; background: #858585; }
.s1 { width: 27px; padding-top: 13px; }
.s1 .th { height: 57px; margin: 15px 0 523px; }
.reader { width: 897px; margin-left: 18px; display: flex; border-left: 1px solid #e3e3e3; background: #fff; overflow: hidden; }
.doc { width: 865px; flex: none; padding-left: 95.500px; font-family: "Liberation Serif", serif; font-size: 24px; line-height: 30px; color: #1f497d; }
.cut { height: 53px; margin-left: 234px; margin-top: -25px; font: 700 23px/30px Lato, sans-serif; letter-spacing: .3px; color: #222; }
.doc p { margin: 0 0 22.500px; }
.doc p:nth-of-type(1) { margin-top: 19px; }
table { width: 726px; margin-top: -.5px; table-layout: fixed; border-collapse: collapse; font: 13.800px/18px Lato, sans-serif; color: #222; }
th, td { border: 1px solid #000; box-shadow: inset 1px 1px 0 #0005; padding: 1px 0 0 8px; text-align: left; vertical-align: top; letter-spacing: 0; }
th { height: 56px; padding-top: 0; vertical-align: middle; background: #e6f2fc; color: #000; letter-spacing: -.15px; }
td { height: 73.500px; letter-spacing: -.05px; }
td.num { text-align: right; padding: 1px 7px 0 0; }
.end { font: italic 21.500px/30px Lato, sans-serif; text-decoration: underline; text-decoration-color: #222; text-decoration-thickness: 2px; text-underline-offset: 3px; }
.s2 { width: 31px; flex: none; padding-top: 12px; border-left: 1px solid #e4e4e4; }
.s2 .th { height: 171px; margin: 249px 0 257px; }
.edgebar { width: 66px; display: flex; flex-direction: column; align-items: center; padding-top: 2px; color: #1b1b1b; }
.eb { height: 60.500px; width: 66px; padding-right: 1px; display: grid; place-items: center; }
.eb:nth-child(5) { margin-top: 4px; }
.eline { width: 42px; height: 1px; background: #b5b5b5; margin-top: 467px; }
.eb.low { margin-top: 3.500px; }
.eb.low + .low { margin-top: -1px; }
.taskbar { height: 72px; flex: none; display: flex; align-items: center; background: #d7e4f2; border-top: 2px solid #c8d7e8; }
.win { margin-left: 543px; }
.tsearch { width: 326px; height: 46px; flex: none; margin-left: 22px; border-radius: 23px; background: #f2f6fb; border: 1px solid #bccbdc; display: flex; align-items: center; padding-left: 15px; color: #555; }
.tsearch > span { width: 62px; margin-left: 15px; }
.mirror { transform: scaleX(-1); color: #222; }
.bagbox { width: 84px; height: 43px; margin-left: 125px; border-radius: 22px; background: #e2e6ea; display: grid; place-items: center; }
.apps { display: flex; margin-left: 10.500px; }
.ap { position: relative; width: 56px; height: 58px; margin-right: 10px; display: grid; place-items: center; border-radius: 6px; }
.ap.on { background: #ecf2f9; box-shadow: 0 0 1px #9fb0c4; }
.ap.dot::after, .ap.on::after { content: ""; position: absolute; bottom: 0; left: 24px; width: 8px; height: 5px; border-radius: 3px; background: #7b828a; }
.ap.on::after { left: 16px; width: 24px; background: #0078d4; }
.tray { flex: 1; display: flex; align-items: center; }
.clock { margin-left: auto; display: flex; flex-direction: column; align-items: flex-end; font-size: 17px; line-height: 23.500px; color: #222; margin: -3px 18px 0 auto; }
.badge { width: 23px; height: 23px; margin: -2px 29px 0 0; border-radius: 50%; background: #0078d4; color: #fff; font-size: 14px; line-height: 23px; text-align: center; }
</style>
